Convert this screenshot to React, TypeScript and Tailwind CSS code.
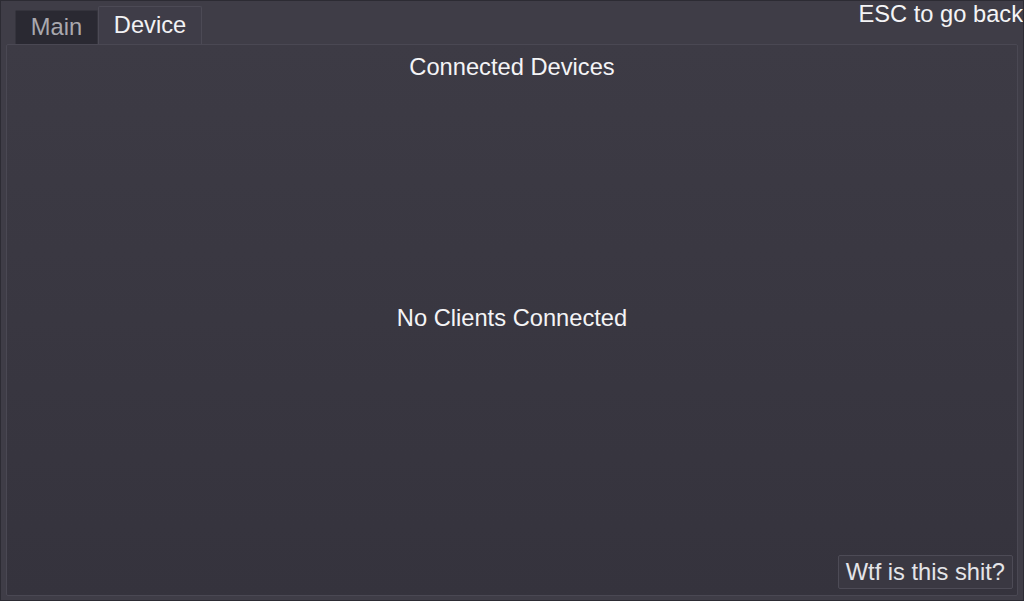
export default function App() {
  return (
    <div
      className="w-[1024px] h-[601px] flex flex-col bg-[#3f3d47] border border-[#2c2b33] text-white overflow-hidden"
      style={{ fontFamily: '"Liberation Sans", Arial, sans-serif' }}
    >
      {/* Header: tabs + esc hint */}
      <div className="flex items-start justify-between h-[43px] shrink-0">
        <div className="flex items-end h-full pl-[14px]">
          <div className="h-[34px] w-[83px] flex items-center justify-center bg-[#2a2932] border border-[#35343d] border-b-0 rounded-t-[2px] text-[23.7px] leading-none text-[#a9a8ae]">
            Main
          </div>
          <div className="h-[38px] w-[104px] flex items-center justify-center bg-[#3f3d48] border border-[#4c4a55] border-b-0 rounded-t-[2px] text-[23.7px] leading-none text-[#f2f2f4] pt-[1px]">
            Device
          </div>
        </div>
        <div className="text-[23.7px] leading-none pt-[2px] text-[#f4f4f6]">ESC to go back</div>
      </div>

      {/* Panel */}
      <div className="flex-1 mx-[5px] mb-[4px] flex flex-col border border-[#4a4853] rounded-[2px] bg-gradient-to-b from-[#3d3b45] to-[#35333d]">
        <div className="text-center text-[23.7px] leading-none text-[#f4f4f6] pt-[11px]">Connected Devices</div>
        <div className="flex-1 flex items-center justify-center text-[23.7px] leading-none text-[#f4f4f6] pt-[3px]">
          No Clients Connected
        </div>
        <div className="flex justify-end pr-[4px] pb-[6px]">
          <button className="h-[34px] px-[7px] bg-[#3a3842] border border-[#4d4b56] rounded-[2px] text-[23.7px] leading-none text-[#e4e4e8] pt-[1px]">
            Wtf is this shit?
          </button>
        </div>
      </div>
    </div>
  );
}
